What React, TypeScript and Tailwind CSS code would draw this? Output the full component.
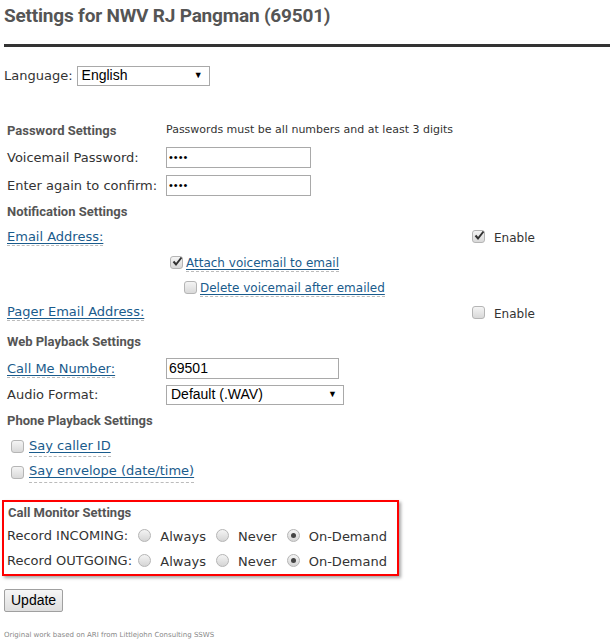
import React from "react";

const body = "font-['DejaVu_Sans',Verdana,sans-serif]";
const head = "font-['Roboto',sans-serif] font-bold text-[#555] text-[13px]";

function Check({ on }: { on?: boolean }) {
  return (
    <span className="relative inline-flex h-[13px] w-[13px] shrink-0 items-center justify-center rounded-[3px] border border-[#b5b5b5] bg-gradient-to-b from-[#f4f4f4] to-[#d9d9d9]">
      {on && (
        <svg width="11" height="11" viewBox="0 0 11 11" className="absolute -top-[1px] left-[1px]">
          <path d="M1.5 5.5 L4 8.5 L9.5 1.5" fill="none" stroke="#333" strokeWidth="2" />
        </svg>
      )}
    </span>
  );
}

function Radio({ on }: { on?: boolean }) {
  return (
    <span className="inline-flex h-[13px] w-[13px] shrink-0 items-center justify-center rounded-full border border-[#b5b5b5] bg-gradient-to-b from-[#f4f4f4] to-[#d5d5d5]">
      {on && <span className="h-[5px] w-[5px] rounded-full bg-[#444]" />}
    </span>
  );
}

function Link({ children }: { children: React.ReactNode }) {
  return (
    <span className="border-b border-dashed border-[#bbb] pb-[1px] text-[#1a5b8c] underline underline-offset-2">
      {children}
    </span>
  );
}

function Select({ value, w }: { value: string; w: string }) {
  return (
    <div className={`flex h-[20px] ${w} items-center justify-between border border-[#a9a9a9] bg-white pl-[4px] pr-[6px] font-['Liberation_Sans',Arial,sans-serif] text-[14px] text-black`}>
      <span>{value}</span>
      <span className="text-[9px]">▼</span>
    </div>
  );
}

function Input({ value, w, pw }: { value: string; w: string; pw?: boolean }) {
  return (
    <div className={`flex h-[21px] ${w} items-center border border-[#a9a9a9] bg-white pl-[2px] font-['Liberation_Sans',Arial,sans-serif] text-black ${pw ? "text-[11px] tracking-[1px]" : "text-[14px]"}`}>
      {value}
    </div>
  );
}

function RadioSet({ label, pick }: { label: string; pick: number }) {
  const opts = ["Always", "Never", "On-Demand"];
  return (
    <div className="flex h-[25px] items-center whitespace-nowrap">
      <span className="w-[143px] pl-[3px]">{label}</span>
      {opts.map((o, i) => (
        <span key={o} className="mr-[10px] flex items-center gap-[9px]">
          <Radio on={i === pick} />
          <span className="mt-[3px]">{o}</span>
        </span>
      ))}
    </div>
  );
}

export default function App() {
  return (
    <div className={`${body} min-h-[644px] w-[615px] bg-white text-[13px] text-[#333]`}>
      <h1 className="pl-[4px] pt-[2px] font-['Roboto',sans-serif] text-[19px] font-bold tracking-[-0.2px] text-[#555]">
        Settings for NWV RJ Pangman (69501)
      </h1>
      <div className="mx-[4px] mt-[13px] h-[3px] w-[606px] bg-[#333]" />

      <div className="mt-[19px] flex items-center pl-[4px]">
        <span className="mr-[4px]">Language:</span>
        <Select value="English" w="w-[133px]" />
      </div>

      <div className="mt-[32px] pl-[2px]">
        <div className="flex h-[26px] items-center">
          <span className={`w-[164px] pl-[5px] ${head}`}>Password Settings</span>
          <span className="text-[11px]">Passwords must be all numbers and at least 3 digits</span>
        </div>
        <div className="flex h-[28px] items-center">
          <span className="w-[164px] pl-[5px]">Voicemail Password:</span>
          <Input value="••••" w="w-[145px]" pw />
        </div>
        <div className="flex h-[28px] items-center">
          <span className="w-[164px] pl-[5px]">Enter again to confirm:</span>
          <Input value="••••" w="w-[145px]" pw />
        </div>
        <div className="flex h-[24px] items-center">
          <span className={`pl-[5px] ${head}`}>Notification Settings</span>
        </div>
        <div className="flex h-[26px] items-center">
          <span className="w-[470px] pl-[5px]">
            <Link>Email Address:</Link>
          </span>
          <Check on />
          <span className="ml-[9px] mt-[3px] text-[12px]">Enable</span>
        </div>
        <div className="flex h-[26px] items-center pl-[168px]">
          <Check on />
          <span className="ml-[3px] text-[12px]">
            <Link>Attach voicemail to email</Link>
          </span>
        </div>
        <div className="flex h-[24px] items-center pl-[182px]">
          <Check />
          <span className="ml-[3px] text-[12px]">
            <Link>Delete voicemail after emailed</Link>
          </span>
        </div>
        <div className="flex h-[28px] items-start pt-[2px]">
          <span className="w-[470px] pl-[5px]">
            <Link>Pager Email Address:</Link>
          </span>
          <span className="flex items-center">
            <Check />
            <span className="ml-[9px] mt-[3px] text-[12px]">Enable</span>
          </span>
        </div>
        <div className="flex h-[28px] items-center">
          <span className={`pl-[5px] ${head}`}>Web Playback Settings</span>
        </div>
        <div className="flex h-[26px] items-center">
          <span className="w-[164px] pl-[5px]">
            <Link>Call Me Number:</Link>
          </span>
          <Input value="69501" w="w-[173px]" />
        </div>
        <div className="flex h-[26px] items-center">
          <span className="w-[164px] pl-[5px]">Audio Format:</span>
          <Select value="Default (.WAV)" w="w-[178px]" />
        </div>
        <div className="flex h-[26px] items-center">
          <span className={`pl-[5px] ${head}`}>Phone Playback Settings</span>
        </div>
        <div className="flex h-[26px] items-center gap-[5px] pl-[9px]">
          <Check />
          <Link>Say caller ID</Link>
        </div>
        <div className="flex h-[25px] items-center gap-[5px] pl-[9px]">
          <Check />
          <Link>Say envelope (date/time)</Link>
        </div>
      </div>

      <div className="ml-[2px] mt-[15px] w-[397px] border-2 border-[#f00] pb-[1px] shadow-[2px_2px_3px_rgba(0,0,0,0.35)]">
        <div className={`pl-[4px] pt-[1px] ${head}`}>Call Monitor Settings</div>
        <div className="pt-[1px]">
          <RadioSet label="Record INCOMING:" pick={2} />
          <RadioSet label="Record OUTGOING:" pick={2} />
        </div>
      </div>

      <button className="ml-[4px] mt-[13px] h-[23px] rounded-[2px] border border-[#a0a0a0] bg-gradient-to-b from-[#f6f6f6] to-[#dedede] px-[6px] font-['Liberation_Sans',Arial,sans-serif] text-[14px] text-black">
        Update
      </button>

      <div className="mt-[18px] pl-[4px] text-[7px] text-[#888]">
        Original work based on ARI from Littlejohn Consulting SSWS
      </div>
    </div>
  );
}
